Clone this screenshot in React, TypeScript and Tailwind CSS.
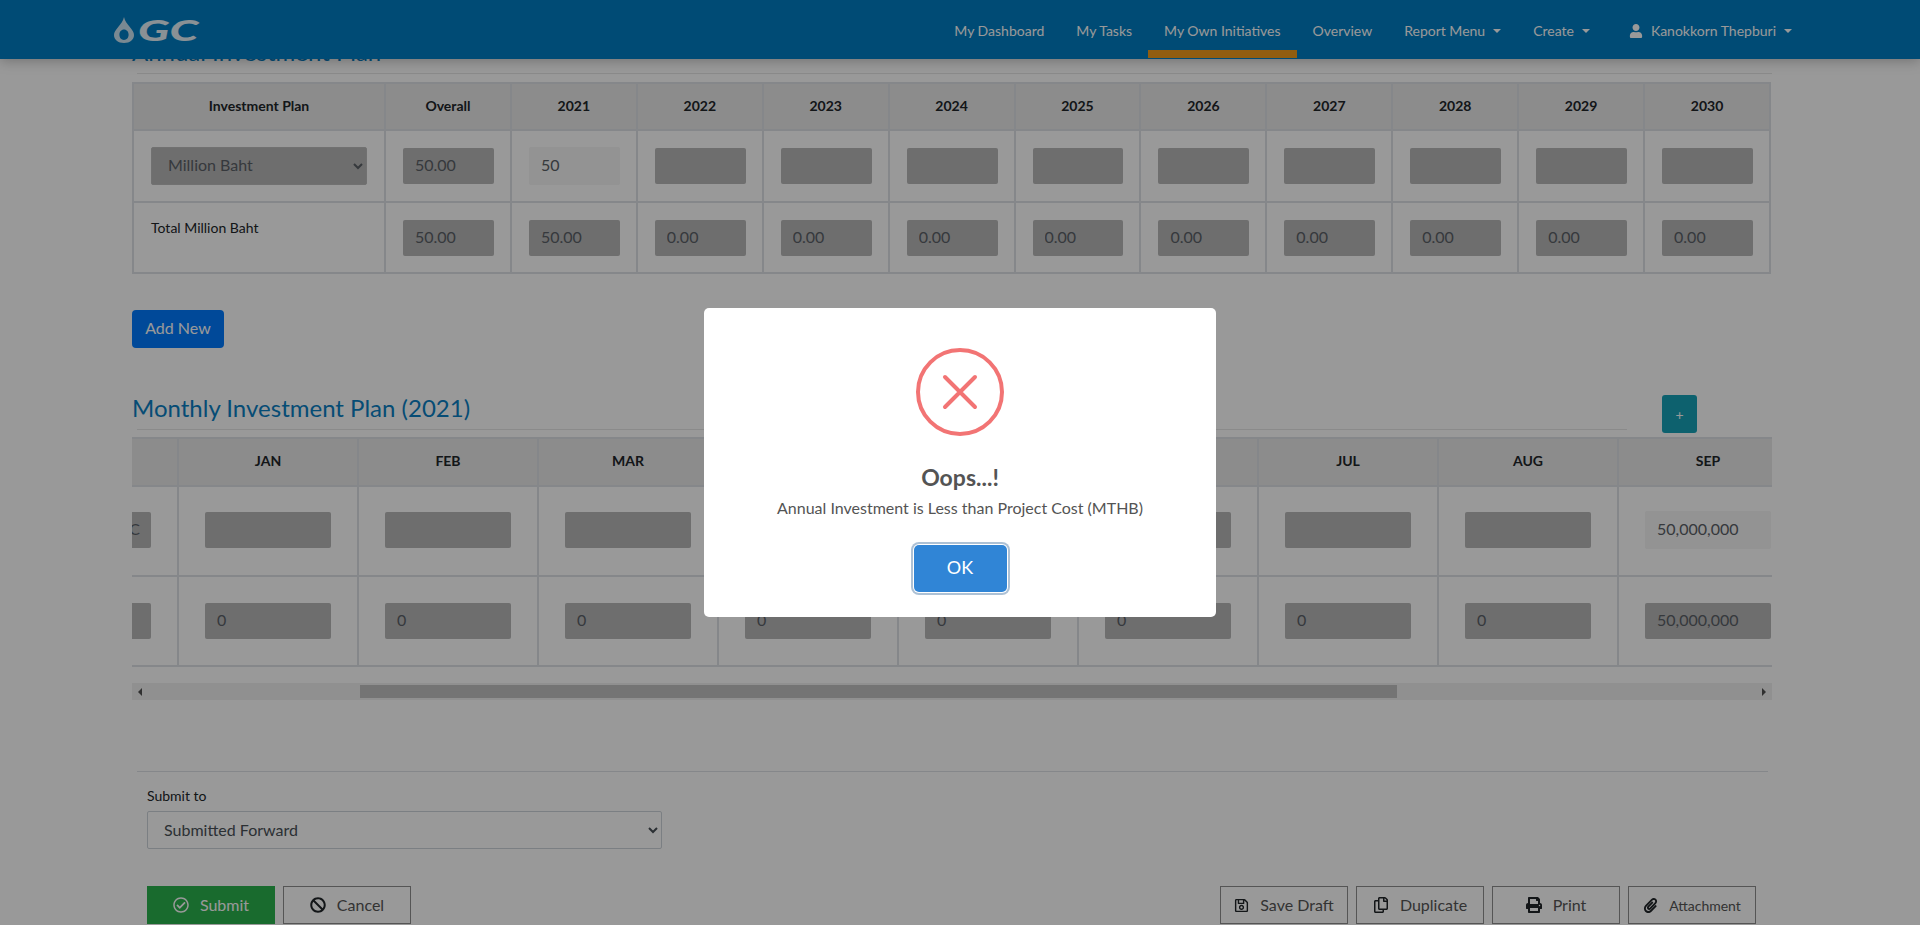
import { FaBan, FaPaperclip, FaPrint, FaRegCheckCircle, FaRegCopy, FaRegSave, FaUser } from 'react-icons/fa';
import type { ReactNode } from 'react';

const years = ['2021', '2022', '2023', '2024', '2025', '2026', '2027', '2028', '2029', '2030'];
const months = ['JAN', 'FEB', 'MAR', 'APR', 'MAY', 'JUN', 'JUL', 'AUG', 'SEP'];

const navLinks = ['My Dashboard', 'My Tasks', 'My Own Initiatives', 'Overview'];

function Field({ value = '', active = false }: { value?: string; active?: boolean }) {
  return (
    <input
      readOnly
      value={value}
      className={
        active
          ? 'block w-full h-[38px] -my-px px-[12px] pb-[3px] rounded-[2px] bg-[#f5f5f5] text-[16px] text-[#5a6066] outline-none'
          : 'block w-full h-[36px] px-[12px] pb-[3px] rounded-[2px] bg-[#b7b7b7] text-[16px] text-[#5a6066] outline-none'
      }
    />
  );
}

function SectionTitle({ children }: { children: ReactNode }) {
  return (
    <div>
      <h2 className="text-[24px] leading-[29px] text-[#0a7fc4]">{children}</h2>
      <div className="ml-[5px] mt-[7px] border-b border-[#e6e6e6]" />
    </div>
  );
}

function OutlineButton({ icon, label, small = false }: { icon: ReactNode; label: string; small?: boolean }) {
  return (
    <button className="flex h-[38px] w-[128px] items-center justify-center gap-[11px] border border-[#8e8e8e] text-[#555]">
      {icon}
      <span className={small ? 'text-[14px]' : 'text-[16px]'}>{label}</span>
    </button>
  );
}

export default function App() {
  const cellBorder = 'border-2 border-[#dee2e6]';
  const headCell = `${cellBorder} bg-[#e9e9e9] pb-[3px] text-center text-[14px] font-bold text-[#212529]`;
  const yearCell = `${cellBorder} pl-[17px] pr-[16px]`;
  const monthCell = `${cellBorder} px-[26px]`;

  return (
    <div className="relative h-[925px] overflow-hidden bg-white font-['Lato','Noto_Sans',sans-serif]">
      {/* Top nav */}
      <nav className="relative z-10 flex h-[59px] items-stretch bg-[#007dc3] pl-[114px] pr-[112px] text-[14px] text-white shadow-[0_2px_12px_rgba(0,0,0,0.25)]">
        <div className="flex items-center gap-[4px]">
          <svg width="20" height="26" viewBox="0 0 20 26" className="text-white/80">
            <path
              fillRule="evenodd"
              fill="currentColor"
              d="M10 0c.8 4 3 6.500 5.800 10 2.600 3.200 4.200 5.300 4.200 8 0 4.500-4 8-10 8S0 22.500 0 18c0-2.700 1.600-4.800 4.200-8C7 6.500 9.200 4 10 0zm0 12.500c-2.800 0-4.600 2.300-4.600 5.300 0 3 1.900 5.200 4.600 5.200s4.600-2.200 4.600-5.200c0-3-1.800-5.300-4.600-5.300z"
            />
          </svg>
          <span className="w-[60px] origin-left scale-x-[1.6] text-[29px] leading-none font-black italic text-white/90">GC</span>
        </div>
        <div className="ml-auto flex items-stretch">
          {navLinks.map((link) => (
            <a
              key={link}
              className={
                link === 'My Own Initiatives'
                  ? 'mb-px flex items-center border-b-[8px] border-[#f29b1c] px-4 pt-[11px]'
                  : 'flex items-center px-4 pt-[2px]'
              }
            >
              {link}
            </a>
          ))}
          <a className="flex items-center gap-[8px] px-4 pt-[2px]">
            Report Menu
            <span className="border-x-[4px] border-t-[4px] border-x-transparent border-t-white" />
          </a>
          <a className="flex items-center gap-[8px] px-4 pt-[2px]">
            Create
            <span className="border-x-[4px] border-t-[4px] border-x-transparent border-t-white" />
          </a>
          <a className="ml-[7px] flex items-center gap-[8px] px-4 pt-[2px]">
            <FaUser className="h-[14px] w-[14px]" />
            Kanokkorn Thepburi
            <span className="border-x-[4px] border-t-[4px] border-x-transparent border-t-white" />
          </a>
        </div>
      </nav>

      <main className="-mt-[22px] ml-[132px] w-[1640px]">
        {/* Annual plan, scrolled mostly under the nav */}
        <SectionTitle>Annual Investment Plan</SectionTitle>
        <table className="mt-[8px] w-[1639px] table-fixed border-collapse">
          <colgroup>
            <col className="w-[252px]" />
            {Array.from({ length: 11 }).map((_, i) => (
              <col key={i} />
            ))}
          </colgroup>
          <thead>
            <tr className="h-[47px]">
              <th className={headCell}>Investment Plan</th>
              <th className={headCell}>Overall</th>
              {years.map((y) => (
                <th key={y} className={headCell}>
                  {y}
                </th>
              ))}
            </tr>
          </thead>
          <tbody>
            <tr className="h-[72px]">
              <td className={`${cellBorder} px-[17px]`}>
                <select
                  defaultValue="Million Baht"
                  className="h-[38px] w-full rounded-[2px] border border-[#bdbdbd] bg-[#b7b7b7] px-3 pb-[3px] text-[16px] text-[#5a6066]"
                >
                  <option>Million Baht</option>
                </select>
              </td>
              <td className={yearCell}>
                <Field value="50.00" />
              </td>
              {years.map((y) => (
                <td key={y} className={yearCell}>
                  {y === '2021' ? <Field value="50" active /> : <Field />}
                </td>
              ))}
            </tr>
            <tr className="h-[71px]">
              <td className={`${cellBorder} px-[17px] pt-[15px] align-top text-[14px] leading-[20px] text-[#212529]`}>
                Total Million Baht
              </td>
              <td className={yearCell}>
                <Field value="50.00" />
              </td>
              {years.map((y) => (
                <td key={y} className={yearCell}>
                  <Field value={y === '2021' ? '50.00' : '0.00'} />
                </td>
              ))}
            </tr>
          </tbody>
        </table>

        <button className="mt-[36px] block h-[38px] w-[92px] rounded-[4px] bg-[#007bff] pb-[2px] text-[16px] text-white">
          Add New
        </button>

        {/* Monthly plan */}
        <div className="mt-[45px] flex items-end">
          <div className="w-[1495px]">
            <SectionTitle>Monthly Investment Plan (2021)</SectionTitle>
          </div>
          <button className="mb-[-3px] ml-[35px] h-[38px] w-[35px] rounded-[3px] bg-[#17a2b8] text-[14px] text-white">+</button>
        </div>
        <div className="mt-[7px] overflow-hidden">
          <table className="-ml-[155px] w-[1820px] table-fixed border-collapse">
            <colgroup>
              <col className="w-[200px]" />
              {months.map((m) => (
                <col key={m} className="w-[180px]" />
              ))}
            </colgroup>
            <thead>
              <tr className="h-[48px]">
                <th className={headCell} />
                {months.map((m) => (
                  <th key={m} className={headCell}>
                    {m}
                  </th>
                ))}
              </tr>
            </thead>
            <tbody>
              <tr className="h-[90px]">
                <td className={`${monthCell} pb-[2px]`}>
                  <input readOnly value="GC" className="block h-[36px] w-full rounded-[2px] bg-[#b7b7b7] pr-[11px] pb-[3px] text-right text-[16px] text-[#5a6066] outline-none" />
                </td>
                {months.map((m) => (
                  <td key={m} className={`${monthCell} pb-[2px]`}>
                    {m === 'SEP' ? <Field value="50,000,000" active /> : <Field />}
                  </td>
                ))}
              </tr>
              <tr className="h-[90px]">
                <td className={monthCell}>
                  <Field />
                </td>
                {months.map((m) => (
                  <td key={m} className={monthCell}>
                    <Field value={m === 'SEP' ? '50,000,000' : '0'} />
                  </td>
                ))}
              </tr>
            </tbody>
          </table>
        </div>

        {/* Horizontal scrollbar */}
        <div className="mt-[16px] flex h-[17px] w-[1640px] items-center bg-[#f1f1f1]">
          <span className="ml-[6px] border-y-[4px] border-r-[4px] border-y-transparent border-r-[#505050]" />
          <div className="ml-[218px] h-[13px] w-[1037px] bg-[#c1c1c1]" />
          <span className="ml-auto mr-[6px] border-y-[4px] border-l-[4px] border-y-transparent border-l-[#505050]" />
        </div>

        <div className="ml-[5px] mt-[71px] w-[1631px] border-t border-[#dee2e6]" />

        {/* Submit block */}
        <div className="pl-[15px] pr-[16px]">
          <label className="mt-[14px] block text-[14px] leading-[20px] text-[#212529]">Submit to</label>
          <select
            defaultValue="Submitted Forward"
            className="mt-[5px] block h-[38px] w-[515px] rounded-[2px] border border-[#ced4da] bg-white px-3 pb-[2px] text-[16px] text-[#495057]"
          >
            <option>Submitted Forward</option>
          </select>
          <div className="mt-[37px] flex justify-between">
            <div className="flex gap-[8px]">
              <button className="flex h-[38px] w-[128px] items-center justify-center gap-[11px] bg-[#2bb24e] text-[16px] text-white">
                <FaRegCheckCircle className="h-[16px] w-[16px]" />
                Submit
              </button>
              <OutlineButton icon={<FaBan className="h-[16px] w-[16px] text-[#212529]" />} label="Cancel" />
            </div>
            <div className="flex gap-[8px]">
              <OutlineButton icon={<FaRegSave className="h-[15px] w-[15px] text-[#212529]" />} label="Save Draft" />
              <OutlineButton icon={<FaRegCopy className="h-[16px] w-[16px] text-[#212529]" />} label="Duplicate" />
              <OutlineButton icon={<FaPrint className="h-[16px] w-[16px] text-[#212529]" />} label="Print" />
              <OutlineButton icon={<FaPaperclip className="h-[15px] w-[15px] text-[#212529]" />} label="Attachment" small />
            </div>
          </div>
        </div>
      </main>

      {/* Alert dialog */}
      <div className="absolute inset-0 z-20 flex items-center justify-center bg-black/40">
        <div className="flex h-[309px] w-[512px] flex-col items-center rounded-[5px] bg-white pt-[40px]">
          <div className="flex h-[88px] w-[88px] items-center justify-center rounded-full border-[4px] border-[#f27474]">
            <svg width="38" height="38" viewBox="0 0 38 38">
              <path d="M4 4l30 30M34 4L4 34" stroke="#f27474" strokeWidth="4" strokeLinecap="round" />
            </svg>
          </div>
          <h2 className="mt-[26px] text-[23px] leading-[30px] font-bold text-[#545454]">Oops...!</h2>
          <p className="mt-[6px] text-[16px] leading-[20px] text-[#545454]">Annual Investment is Less than Project Cost (MTHB)</p>
          <button className="mt-[27px] h-[47px] w-[93px] rounded-[5px] bg-[#3085d6] pb-[2px] text-[18px] text-white shadow-[0_0_0_1px_#fff,0_0_0_3px_rgba(50,100,150,0.4)]">
            OK
          </button>
        </div>
      </div>
    </div>
  );
}
